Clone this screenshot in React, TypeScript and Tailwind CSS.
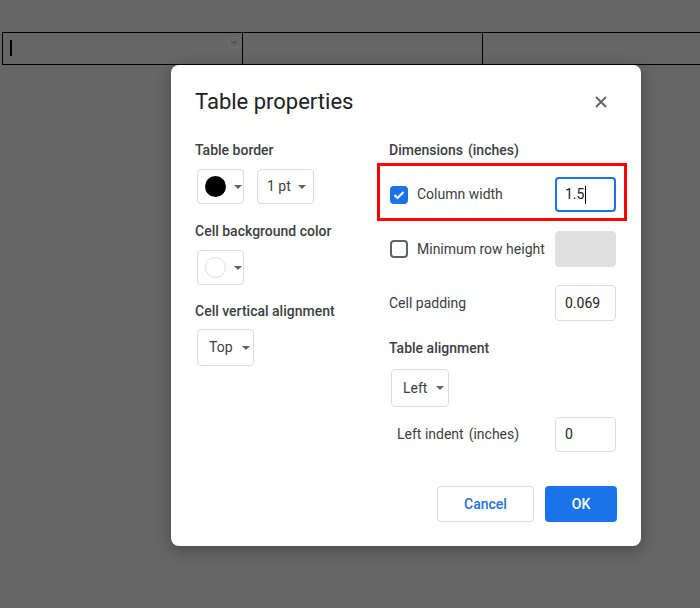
export default function App() {
  const label = "h-5 text-[14px] leading-5 font-medium text-[#3c4043]";
  const dropBtn =
    "flex items-center rounded border border-[#dadce0] bg-white text-[14px] text-[#3c4043]";
  const input =
    "flex h-full w-[61px] items-center rounded border border-[#dadce0] pl-[9px] text-[14px] text-[#202124]";

  const Caret = () => (
    <svg width="8" height="4" viewBox="0 0 8 4" className="shrink-0">
      <path d="M0 0 L4 4 L8 0 Z" fill="#5f6368" />
    </svg>
  );

  return (
    <div className="h-[608px] w-[700px] overflow-hidden bg-[#666666] font-['Roboto',sans-serif]">
      {/* document table behind the dialog */}
      <div className="pl-[2px] pt-8">
        <div className="flex h-[33px] w-[760px] border border-black">
          <div className="relative w-[240px] border-r border-black">
            <div className="absolute left-[7px] top-[7px] h-4 w-[2px] bg-black" />
            <div className="absolute right-[1px] top-[4px] flex h-[11px] w-[13px] items-center justify-center rounded-sm border border-[#707070]">
              <svg width="7" height="4" viewBox="0 0 8 4">
                <path d="M0 0 L4 4 L8 0 Z" fill="#555555" />
              </svg>
            </div>
          </div>
          <div className="w-[240px] border-r border-black" />
          <div className="flex-1" />
        </div>
      </div>

      {/* dialog */}
      <div className="ml-[171px] h-[481px] w-[470px] rounded-lg bg-white px-6 pt-[23px] shadow-[0_4px_16px_rgba(0,0,0,0.3)]">
        <div className="flex h-7 items-center justify-between">
          <div className="text-[22px] leading-7 text-[#202124]">Table properties</div>
          <svg width="12" height="12" viewBox="0 0 12 12" className="mr-[10px]">
            <path d="M1 1 L11 11 M11 1 L1 11" stroke="#5f6368" strokeWidth="1.8" />
          </svg>
        </div>

        <div className="mt-6 grid grid-cols-[194px_227px]">
          {/* left column */}
          <div className="flex flex-col">
            <div className={label}>Table border</div>
            <div className="ml-[2px] mt-[9px] flex h-[35px] gap-[13px]">
              <div className={`${dropBtn} w-[47px] gap-[8px] pl-[7px]`}>
                <div className="h-[21px] w-[21px] rounded-full bg-black" />
                <Caret />
              </div>
              <div className={`${dropBtn} w-[57px] gap-[7px] pl-[9px]`}>
                <span>1 pt</span>
                <Caret />
              </div>
            </div>

            <div className={`${label} mt-[17px]`}>Cell background color</div>
            <div className="ml-[2px] mt-[9px] flex h-[35px]">
              <div className={`${dropBtn} w-[47px] gap-[8px] pl-[7px]`}>
                <div className="h-[21px] w-[21px] rounded-full border border-[#dadce0] bg-white" />
                <Caret />
              </div>
            </div>

            <div className={`${label} mt-4`}>Cell vertical alignment</div>
            <div className="ml-[2px] mt-2 flex h-[37px]">
              <div className={`${dropBtn} w-[57px] gap-[9px] pl-[11px]`}>
                <span>Top</span>
                <Caret />
              </div>
            </div>
          </div>

          {/* right column */}
          <div className="flex flex-col">
            <div className={label}>
              Dimensions<span className="ml-[5px]">(inches)</span>
            </div>

            <div className="relative mt-[17px] flex h-[35px] items-center">
              <div className="absolute -bottom-[9px] -left-3 -right-[11px] -top-[14px] border-[3px] border-[#ff0000]" />
              <div className="ml-px flex h-[18px] w-[18px] items-center justify-center rounded-sm bg-[#1a73e8]">
                <svg width="12" height="10" viewBox="0 0 12 10">
                  <path d="M1.5 5 L4.5 8 L10.5 2" stroke="white" strokeWidth="2" fill="none" />
                </svg>
              </div>
              <span className="ml-[9px] text-[14px] text-[#3c4043]">Column width</span>
              <div className="ml-auto flex h-full w-[61px] items-center rounded border-2 border-[#1a73e8] pl-2 text-[14px] text-[#202124]">
                1.5<span className="ml-px h-[18px] w-px bg-black" />
              </div>
            </div>

            <div className="mt-[19px] flex h-[36px] items-center">
              <div className="ml-px h-[18px] w-[18px] rounded-sm border-2 border-[#5f6368]" />
              <span className="ml-[9px] text-[14px] text-[#3c4043]">Minimum row height</span>
              <div className="ml-auto h-full w-[61px] rounded border border-[#e0e0e0] bg-[#e0e0e0]" />
            </div>

            <div className="mt-[18px] flex h-[36px] items-center">
              <span className="text-[14px] text-[#3c4043]">Cell padding</span>
              <div className="ml-auto h-full">
                <div className={input}>0.069</div>
              </div>
            </div>

            <div className={`${label} mt-[17px]`}>Table alignment</div>
            <div className="ml-[2px] mt-[11px] flex h-[38px]">
              <div className={`${dropBtn} w-[58px] gap-[9px] pl-[11px]`}>
                <span>Left</span>
                <Caret />
              </div>
            </div>

            <div className="mt-[10px] flex h-[35px] items-center">
              <span className="pl-2 text-[14px] text-[#3c4043]">
                Left indent<span className="ml-[5px]">(inches)</span>
              </span>
              <div className="ml-auto h-full">
                <div className={input}>0</div>
              </div>
            </div>
          </div>
        </div>

        <div className="mt-[34px] flex h-9 justify-end gap-[11px]">
          <button className="w-[97px] rounded border border-[#dadce0] bg-white text-[14px] font-medium text-[#1a73e8]">
            Cancel
          </button>
          <button className="w-[72px] rounded bg-[#1a73e8] text-[14px] font-medium text-white">
            OK
          </button>
        </div>
      </div>
    </div>
  );
}
